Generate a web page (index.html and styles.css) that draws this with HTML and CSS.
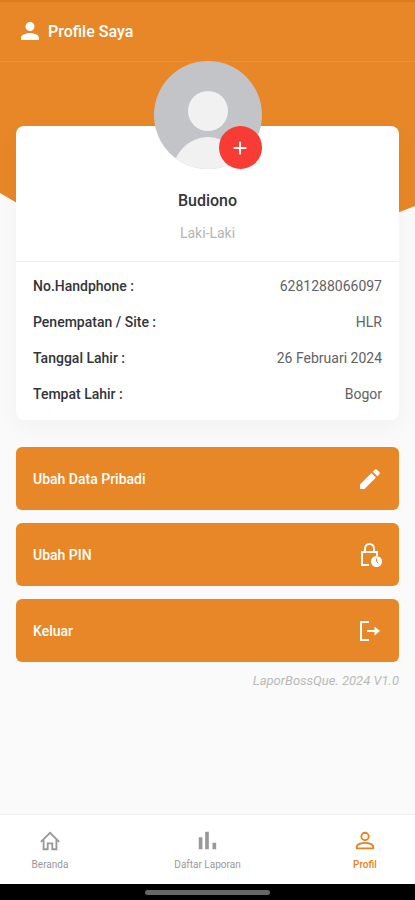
FILE: index.html
```html
<!DOCTYPE html>
<html lang="id">
<head>
<meta charset="utf-8">
<meta name="viewport" content="width=device-width, initial-scale=1">
<title>Profile Saya</title>
<link rel="stylesheet" href="styles.css">
</head>
<body>
<div class="app">
  <header class="topbar">
    <svg class="icon" viewBox="0 0 24 24" aria-hidden="true"><path d="M12 11a4.500 4.500 0 1 0 0-9 4.500 4.500 0 0 0 0 9zm0 2c-3 0-9 1.500-9 4.500V20h18v-2.500c0-3-6-4.500-9-4.500z"/></svg>
    <h1>Profile Saya</h1>
  </header>
  <main class="main">
    <div class="backdrop"></div>
    <div class="content">
      <section class="card">
        <div class="identity">
          <div class="avatar">
            <svg class="avatar-image" viewBox="0 0 108 108" role="img" aria-label="Foto profil">
              <defs><clipPath id="round"><circle cx="54" cy="54" r="54"/></clipPath></defs>
              <g clip-path="url(#round)">
                <rect width="108" height="108" fill="#c2c4c8"/>
                <circle cx="54" cy="50" r="20" fill="#f1f1f1"/>
                <ellipse cx="54" cy="114" rx="36" ry="38" fill="#f1f1f1"/>
              </g>
            </svg>
            <button class="add" type="button" aria-label="Tambah foto"><svg viewBox="0 0 24 24" aria-hidden="true"><path d="M19 13h-6v6h-2v-6H5v-2h6V5h2v6h6z"/></svg></button>
          </div>
          <h2>Budiono</h2>
          <p>Laki-Laki</p>
        </div>
        <dl class="details">
          <div><dt>No.Handphone :</dt><dd>6281288066097</dd></div>
          <div><dt>Penempatan / Site :</dt><dd>HLR</dd></div>
          <div><dt>Tanggal Lahir :</dt><dd>26 Februari 2024</dd></div>
          <div><dt>Tempat Lahir :</dt><dd>Bogor</dd></div>
        </dl>
      </section>
      <div class="actions">
        <button type="button">Ubah Data Pribadi
          <svg class="icon" viewBox="0 0 24 24" aria-hidden="true"><path d="M2 17.500V22h4.500L17.900 10.600l-4.500-4.500zM21.500 7a1.200 1.200 0 0 0 0-1.700l-2.800-2.800a1.200 1.200 0 0 0-1.700 0l-2.200 2.200 4.500 4.500z"/></svg>
        </button>
        <button type="button">Ubah PIN
          <svg class="icon lock" viewBox="0 0 24 26" aria-hidden="true"><path class="line" d="M11 23H4V10h15v4M7 10V6.500a4.500 4.500 0 0 1 9 0V10"/><circle cx="18.500" cy="19.500" r="5.500"/><path class="hand" d="M18.500 16.500v3l2 2"/></svg>
        </button>
        <button type="button">Keluar
          <svg class="icon" viewBox="0 0 24 24" aria-hidden="true"><path class="line" d="M11 3H3v18h8M9 12h9"/><path d="M16.500 7.500L22 12l-5.500 4.500z"/></svg>
        </button>
      </div>
      <p class="version">LaporBossQue. 2024 V1.0</p>
    </div>
  </main>
  <nav class="tabs">
    <a href="#beranda"><svg class="icon" viewBox="0 0 24 24" aria-hidden="true"><path class="line" d="M2 13L12 3l10 10M5 10.500V21h4.500v-6.500h5V21H19V10.500"/></svg>Beranda</a>
    <a href="#laporan"><svg class="icon" viewBox="0 0 24 24" aria-hidden="true"><path d="M3 8h4v13H3zM10 2h4v19h-4zM18 14h4v7h-4z"/></svg>Daftar Laporan</a>
    <a class="active" href="#profil" aria-current="page"><svg class="icon" viewBox="0 0 24 24" aria-hidden="true"><circle class="line" cx="12" cy="7" r="4"/><path class="line" d="M3 20v-1.500c0-3 5-4.500 9-4.500s9 1.500 9 4.500V20z"/></svg>Profil</a>
  </nav>
  <div class="gesture"><span></span></div>
</div>
</body>
</html>
```
FILE: styles.css
```css
* { box-sizing: border-box; }

body {
  margin: 0;
  background: #fafafa;
  color: #333538;
  font-family: Roboto, "Liberation Sans", sans-serif;
  font-size: 14px;
  line-height: 20px;
}

h1, h2, p, dl, dd { margin: 0; }
button { font: inherit; border: 0; cursor: pointer; }

.app {
  min-height: 100vh;
  display: flex;
  flex-direction: column;
}

.icon {
  width: 24px;
  height: 24px;
  flex: none;
  fill: currentColor;
}

.line {
  fill: none;
  stroke: currentColor;
  stroke-width: 2;
}

.topbar {
  display: flex;
  align-items: center;
  gap: 6px;
  height: 62px;
  padding: 0 18px;
  background: #e88727;
  border-top: 2px solid #dd7b1c;
  border-bottom: 1px solid #ea9038;
  color: #fff;
}

h1 {
  font-size: 16px;
  font-weight: 500;
}

.main {
  flex: 1;
  display: grid;
}

.backdrop {
  grid-area: 1 / 1;
  height: 170px;
  background: #e88727;
  clip-path: polygon(0 0, 100% 0, 100% 144px, 84% 100%, 16% 100%, 0 131px);
}

.content {
  grid-area: 1 / 1;
  z-index: 1;
  padding: 64px 16px 16px;
}

.card {
  background: #fff;
  border-radius: 8px;
  box-shadow: 0 8px 24px rgba(0, 0, 0, 0.04);
}

.identity {
  display: flex;
  flex-direction: column;
  align-items: center;
  padding-bottom: 18px;
  border-bottom: 1px solid #eeeeee;
}

.avatar {
  position: relative;
  width: 108px;
  height: 108px;
  margin: -65px 0 22px;
}

.avatar-image { display: block; }

.add {
  position: absolute;
  right: 0;
  bottom: 0;
  display: grid;
  place-items: center;
  width: 43px;
  height: 43px;
  padding: 0;
  border-radius: 50%;
  background: #f83b35;
}

.add svg {
  width: 22px;
  fill: #fff;
}

h2 {
  font-size: 16px;
  font-weight: 500;
  margin-bottom: 12px;
}

.identity p { color: #b4b4b4; }

.details {
  padding: 6px 17px 8px;
}

.details div {
  display: flex;
  justify-content: space-between;
  padding: 8px 0;
}

dt { font-weight: 500; }
dd { color: #606265; }

.actions {
  display: grid;
  gap: 13px;
  margin: 27px 0 9px;
}

.actions button {
  display: flex;
  align-items: center;
  justify-content: space-between;
  height: 63px;
  padding: 0 17px;
  border-radius: 6px;
  background: #e88727;
  color: #fff;
  font-weight: 500;
}

.lock { height: 26px; }

.hand {
  fill: none;
  stroke: #e88727;
}

.version {
  color: #b9b9b9;
  font-size: 13px;
  font-style: italic;
  text-align: right;
}

.tabs {
  display: flex;
  justify-content: space-between;
  height: 70px;
  padding: 15px 30px 0;
  background: #fff;
  border-top: 1px solid #f1f1f1;
}

.tabs a {
  display: flex;
  flex-direction: column;
  align-items: center;
  gap: 5px;
  min-width: 40px;
  color: #999;
  font-size: 10px;
  line-height: 16px;
  text-decoration: none;
}

.tabs .icon {
  width: 22px;
  height: 22px;
}

.tabs .active {
  color: #e58222;
  font-weight: 500;
}

.gesture {
  display: grid;
  place-items: center;
  height: 16px;
  background: #000;
}

.gesture span {
  width: 30%;
  height: 5px;
  border-radius: 3px;
  background: #666;
}
```
